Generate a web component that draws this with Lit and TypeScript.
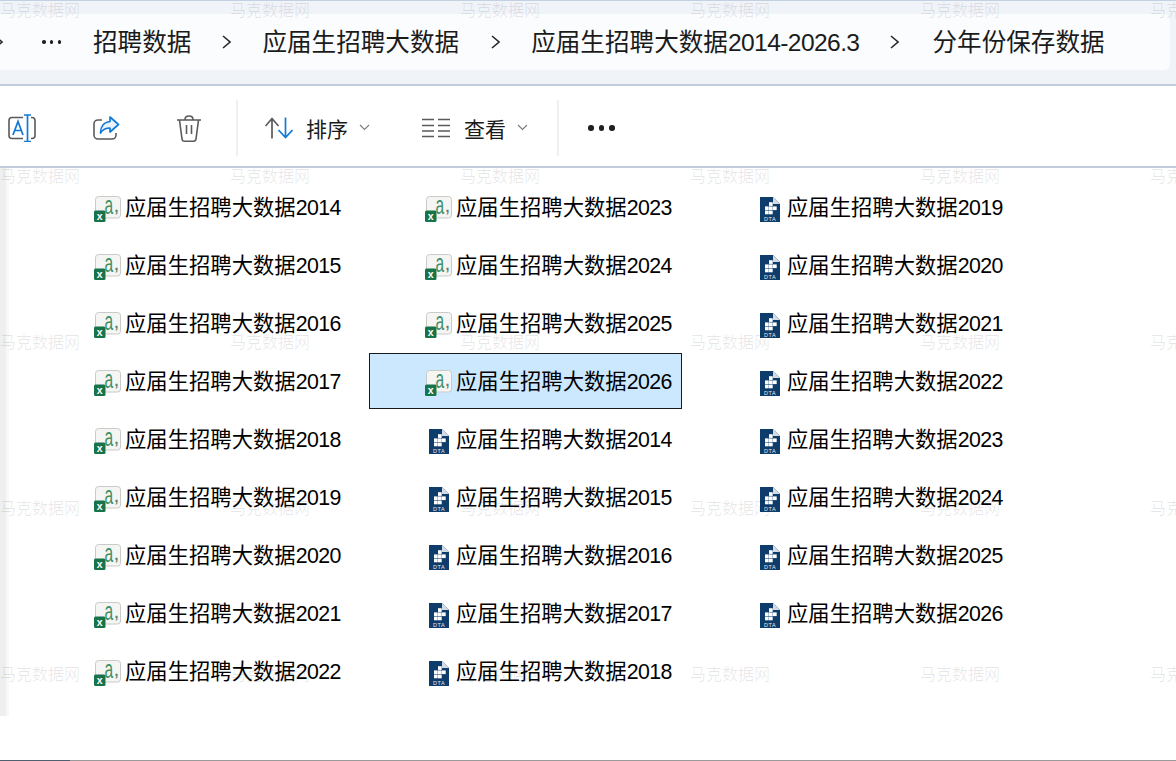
import { LitElement, html, css, svg } from "lit";
import { customElement } from "lit/decorators.js";

const excelIcon = () => svg`<svg class="ficon xl" width="29" height="34" viewBox="0 -6 29 34">
  <rect x="2.5" y="1.5" width="25" height="21.500" rx="3" fill="#f5f5f3" stroke="#c9cbc8"/>
  <text transform="translate(11.500 19) scale(0.62 1)" font-family="Liberation Sans" font-size="25" fill="#3f8f68">a</text>
  <text x="21.500" y="17" font-family="Liberation Sans" font-size="14" font-weight="700" fill="#5b7f6c">,</text>
  <rect x="1" y="15.500" width="11.500" height="11.500" rx="1.500" fill="#17744a"/>
  <text x="6.700" y="24.500" text-anchor="middle" font-family="Liberation Sans" font-size="10.500" font-weight="700" fill="#fff">x</text>
</svg>`;

const dtaIcon = () => svg`<svg class="ficon" width="29" height="28" viewBox="0 0 29 28">
  <path d="M5 2H18L25 9V27H5Z" fill="#0e3c6b"/>
  <path d="M18 2L25 9H18Z" fill="#d3dce5"/>
  <g fill="#fff">
    <rect x="14" y="7.200" width="3.700" height="3.700"/>
    <rect x="10" y="11.400" width="3.700" height="3.700"/><rect x="14" y="11.400" width="3.700" height="3.700"/><rect x="18" y="11.400" width="3.700" height="3.700"/>
    <rect x="10" y="15.600" width="3.700" height="3.700"/><rect x="14" y="15.600" width="3.700" height="3.700"/>
  </g>
  <text x="15" y="25.600" text-anchor="middle" font-family="Liberation Sans" font-size="5.500" letter-spacing=".5" fill="#e4ebf2">DTA</text>
</svg>`;

const chevron = (cls = "") => svg`<svg class="crumb-sep ${cls}" width="9" height="14" viewBox="0 0 9 14"><path d="M1 1L8 7L1 13" fill="none" stroke="#262626" stroke-width="1.5"/></svg>`;
const caret = () => svg`<svg class="caret" width="11" height="7" viewBox="0 0 11 7"><path d="M1 1L5.500 5.500L10 1" fill="none" stroke="#7a7a7a" stroke-width="1.1"/></svg>`;

const years = [2014, 2015, 2016, 2017, 2018, 2019, 2020, 2021, 2022, 2023, 2024, 2025, 2026];
const files: { kind: "x" | "d"; y: number }[] = [
  ...years.map((y) => ({ kind: "x" as const, y })),
  ...years.map((y) => ({ kind: "d" as const, y })),
];

@customElement("app-root")
export class AppRoot extends LitElement {
  static styles = css`
    :host { display: block; width: 1176px; height: 761px; position: relative; overflow: hidden; background: #fff;
      font-family: "Liberation Sans", "Noto Sans CJK SC", sans-serif; color: #1b1b1b; }
    .page { height: 761px; display: flex; flex-direction: column; }
    .head { flex: none; box-sizing: border-box; background: #f0f4f9; border-top: 1px solid #c3d0e2; border-bottom: 2px solid #c1cddb; padding-top: 13px; height: 86px; }
    .crumbs { width: 1170px; height: 56px; box-sizing: border-box; padding-bottom: 4px; background: #fafcfe; border-radius: 0 6px 6px 0; display: flex; align-items: center; gap: 31px; font-size: 24.6px; overflow: hidden; white-space: nowrap; }
    .crumbs .first { margin-left: -6px; margin-right: 8px; display: flex; }
    .ell { display: flex; gap: 4.25px; margin-right: 1px; }
    .ell i { width: 3.500px; height: 3.500px; border-radius: 50%; background: #222; margin-top: 4px; }
    .crumb-sep { flex: none; margin-top: 4px; }
    .crumb-sep.wide { margin-left: 1px; }
    .num-c { letter-spacing: -0.6px; }
    .last { margin-left: 2px; }
    .tools { flex: none; box-sizing: border-box; border-bottom: 2px solid #c1cddb; height: 82px; display: flex; align-items: center; padding-top: 4px; font-size: 21px; }
    .tool { flex: none; display: flex; align-items: center; }
    .rename { margin-left: 8px; } .share { margin-left: 57px; } .trash { margin-left: 56px; }
    .div { width: 2px; height: 56px; background: #efefef; flex: none; margin-left: 34px; }
    .sort { margin-left: 27px; gap: 13px; }
    .sort .caret { margin-left: -2px; margin-right: 1px; margin-bottom: 2px; }
    .view { margin-left: 51px; gap: 14px; }
    .view .caret { margin-left: -3px; margin-bottom: 2px; }
    .div2 { margin-left: 29px; }
    .dots { margin-left: 29px; display: flex; gap: 5px; }
    .dots i { width: 5.500px; height: 5.500px; border-radius: 50%; background: #1f1f1f; }
    .body { flex: none; height: 548px; display: flex; }
    .strip { flex: none; width: 6px; background: #efefef; border-right: 3px solid #f8f8f8; }
    .list { margin-left: 29px; padding-top: 11px; display: grid; grid-auto-flow: column; grid-template-rows: repeat(9, 58px); grid-template-columns: repeat(3, 331px); }
    .item { box-sizing: border-box; width: 313px; height: 56px; display: flex; align-items: center; padding-left: 54px; border: 1px solid transparent; font-size: 21.33px; color: #000; white-space: nowrap; }
    .item.sel { background: #cce8ff; border-color: #1a1a1a; }
    .ficon { flex: none; margin-right: 3px; margin-top: 4px; }
    .ficon.xl { margin-top: -2px; }
    .name { margin-bottom: 4px; }
    .name .num { letter-spacing: -0.6px; }
    .foot { flex: 1; display: flex; flex-direction: column; justify-content: flex-end; }
    .line { height: 1px; background: linear-gradient(to right, #4f5f70 70px, #9a9a9a 70px); }
    .marks { position: absolute; inset: 0; padding-top: 1px; pointer-events: none; display: grid; grid-template-columns: repeat(6, 230px); grid-auto-rows: 166px; font-size: 16px; line-height: 20px; color: rgba(0, 0, 0, 0.09); }
    .marks span { white-space: nowrap; }
  `;

  render() {
    return html`
      <div class="page">
        <div class="head">
          <div class="crumbs">
            <span class="first">${chevron()}</span>
            <span class="ell"><i></i><i></i><i></i></span>
            <span>招聘数据</span>${chevron()}
            <span>应届生招聘大数据</span>${chevron("wide")}
            <span>应届生招聘大数据<span class="num-c">2014-2026.3</span></span>${chevron()}
            <span class="last">分年份保存数据</span>
          </div>
        </div>
        <div class="tools">
          <span class="tool rename">
            <svg width="28" height="28" viewBox="0 0 28 28" fill="none">
              <path d="M15 3.500H4a3 3 0 0 0-3 3v15a3 3 0 0 0 3 3h11M23 3.500h1a3 3 0 0 1 3 3v15a3 3 0 0 1-3 3h-1" stroke="#5a5a5a" stroke-width="1.600"/>
              <path d="M5 21L10 7.500L15 21M6.800 16.500H13.200" stroke="#1279d6" stroke-width="1.700"/>
              <path d="M16 1H23M19.500 1V27.500M16 27.500H23" stroke="#1279d6" stroke-width="1.700"/>
            </svg>
          </span>
          <span class="tool share">
            <svg width="27" height="24" viewBox="0 0 27 24" fill="none">
              <path d="M9 4H5a4 4 0 0 0-4 4v11a4 4 0 0 0 4 4h14a4 4 0 0 0 4-4v-2" stroke="#5a5a5a" stroke-width="1.600"/>
              <path d="M17 1L25.500 8.500L17 16V12C12.500 12 9.500 13.800 7.500 17C7.500 10.500 11 6 17 5.500Z" fill="#eaf3fb" stroke="#1279d6" stroke-width="1.700" stroke-linejoin="round"/>
            </svg>
          </span>
          <span class="tool trash">
            <svg width="26" height="28" viewBox="0 0 26 28" fill="none" stroke="#5a5a5a" stroke-width="1.600">
              <path d="M1 6H25M9 5.500C9 0.800 17 0.800 17 5.500"/>
              <path d="M3.500 6L6 25a2.500 2.500 0 0 0 2.500 2.200h9A2.500 2.500 0 0 0 20 25L22.500 6"/>
              <path d="M10.500 11V20M15.500 11V20"/>
            </svg>
          </span>
          <span class="div"></span>
          <span class="tool sort">
            <svg width="28" height="22" viewBox="0 0 28 22" fill="none" stroke-width="1.700">
              <path d="M0.600 9L7 1.500L13.500 9M7 1.500V21.500" stroke="#5a5a5a"/>
              <path d="M13.500 13L20.500 20.500L27.500 13M20.500 20.500V0.500" stroke="#1279d6"/>
            </svg>
            <span>排序</span>${caret()}
          </span>
          <span class="tool view">
            <svg width="28" height="20" viewBox="0 0 28 20" fill="none" stroke="#5a5a5a" stroke-width="1.500">
              <path d="M0 1.500H12M0 7.500H12M0 13H12M0 18.500H12M16 1.500H28M16 7.500H28M16 13H28M16 18.500H28"/>
            </svg>
            <span>查看</span>${caret()}
          </span>
          <span class="div div2"></span>
          <span class="dots"><i></i><i></i><i></i></span>
        </div>
        <div class="body">
          <div class="strip"></div>
          <div class="list">
            ${files.map(
              (f, i) => html`<div class="item ${i === 12 ? "sel" : ""}">
                ${f.kind === "x" ? excelIcon() : dtaIcon()}
                <span class="name">应届生招聘大数据<span class="num">${f.y}</span></span>
              </div>`
            )}
          </div>
        </div>
        <div class="foot"><div class="line"></div></div>
      </div>
      <div class="marks">
        ${Array.from({ length: 30 }, () => html`<span>马克数据网</span>`)}
      </div>
    `;
  }
}
